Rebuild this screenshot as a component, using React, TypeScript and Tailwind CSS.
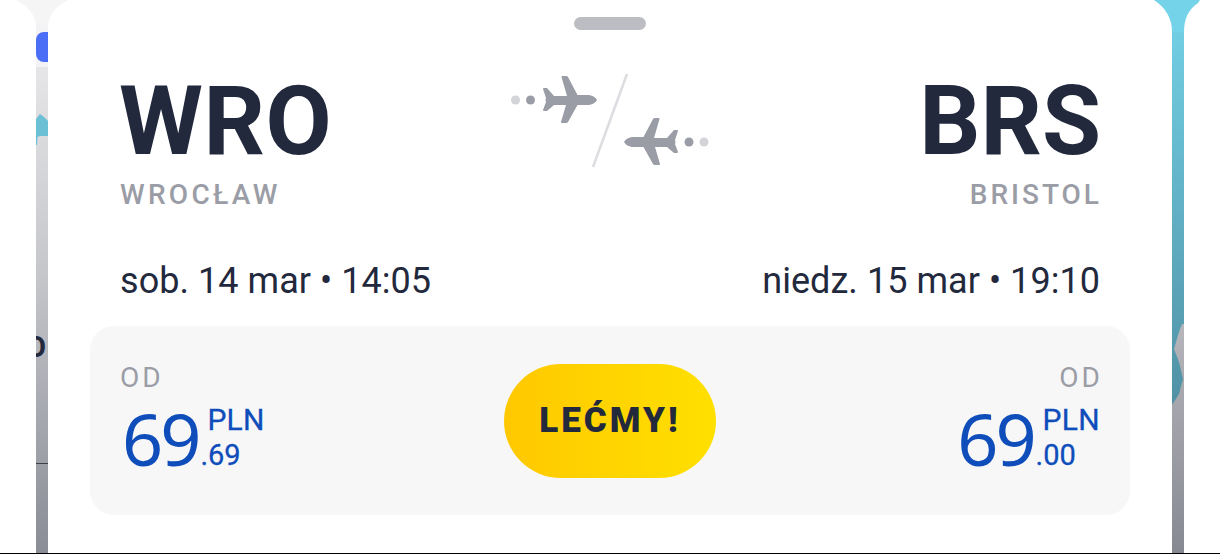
const planePath =
  "M0 13 Q0 12 1 12 H4 L11 20 H24 L18.500 1 Q18.300 0 19.500 0 H23 Q24.500 0 25 1 L34.500 19 H46 Q52 20 54 24 Q52 28 46 29 H34.500 L25 46 Q24.500 47 23 47 H19 Q17.800 47 18 46 L23 29 H11 L4 35 H1 Q0 35 0 34 L3 26 Q2 24 3 22 Z";

const Planes = () => (
  <svg width="200" height="96" viewBox="0 0 200 96" className="block mt-[-1px]">
    <circle cx="5.500" cy="28" r="4.500" fill="#d3d4d8" />
    <circle cx="20.500" cy="28" r="4.500" fill="#9b9da6" />
    <path transform="translate(33 4)" d={planePath} fill="#9b9da6" />
    <line x1="117" y1="2" x2="83" y2="95" stroke="#dcdde0" strokeWidth="2.500" />
    <path transform="translate(168 46) scale(-1 1)" d={planePath} fill="#9b9da6" />
    <circle cx="179" cy="70" r="4.500" fill="#9b9da6" />
    <circle cx="194" cy="70" r="4.500" fill="#d3d4d8" />
  </svg>
);

const Price = ({ value, cents, right }: { value: string; cents: string; right?: boolean }) => (
  <div className={`flex flex-col ${right ? "items-end" : "items-start"}`}>
    <div className={`text-[28px] leading-[30px] tracking-[3px] font-normal text-[#9b9da6] mt-[1px] ${right ? "mr-[-3px]" : ""}`}>OD</div>
    <div className={`flex items-start mt-[9px] text-[#0f4dbb] ${right ? "" : "ml-[2px]"}`}>
      <div className="text-[72px] leading-[72px] tracking-[-3px] font-['Noto_Sans',sans-serif] h-[72px] flex items-center">{value}</div>
      <div className="flex flex-col mt-[3px] ml-[2px]">
        <div className="text-[30px] leading-[30px] pl-[7px] tracking-[0.300px] font-normal [-webkit-text-stroke:0.3px_#0f4dbb]">PLN</div>
        <div className="text-[29px] leading-[30px] mt-[5px] font-normal [-webkit-text-stroke:0.3px_#0f4dbb]">{cents}</div>
      </div>
    </div>
  </div>
);

export default function App() {
  return (
    <div className="relative flex h-[554px] w-[1220px] overflow-hidden bg-white font-['Roboto',sans-serif] border-b border-black">
      <div className="w-[36px] shrink-0 bg-white" />
      <div className="relative w-[12px] shrink-0 bg-gradient-to-b from-[#f0f0f1] via-[#c5c6ca] to-[#8a8c96]">
        <svg className="absolute left-[-20px] top-0" width="52" height="30" viewBox="0 0 52 30">
          <path d="M0 0 H52 Q32 10 32 28 H20 Q20 10 0 0Z" fill="#f6f5f5" />
        </svg>
        <div className="absolute left-0 top-[25px] h-[42px] w-full bg-[#f3f3f5]" />
        <div className="absolute left-0 top-[32px] h-[30px] w-full rounded-l-[8px] bg-[#4a6ef5]" />
        <svg className="absolute left-0 top-[114px]" width="12" height="31" viewBox="0 0 12 31">
          <path d="M0 5 L4 0 L8 3 L12 7 V22 H4 L1.500 23 L1 31 H0Z" fill="#6cc0d6" />
        </svg>
        <div className="absolute left-0 top-[332px] text-[29px] leading-[30px] font-bold text-[#23293d] w-[12px] overflow-hidden">
          <span className="block ml-[-10px]">O</span>
        </div>
        <div className="absolute left-0 top-[463px] h-px w-full bg-[#3f4047]" />
      </div>

      <div className="w-[1124px] shrink-0 rounded-t-[20px] bg-white flex flex-col px-[42px]">
        <div className="self-center mt-[17px] h-[13px] w-[72px] rounded-full bg-[#bcbdc3]" />
        <div className="grid grid-cols-[1fr_auto_1fr] pl-[30px] pr-[30px] mt-[43px]">
          <div>
            <div className="text-[96px] leading-[96px] font-bold text-[#23293d] tracking-[0.500px] ml-[-1px]">WRO</div>
            <div className="text-[28px] leading-[32px] mt-[10px] tracking-[3.300px] font-medium text-[#9b9da6]">WROCŁAW</div>
          </div>
          <Planes />
          <div className="flex flex-col items-end">
            <div className="text-[96px] leading-[96px] font-bold text-[#23293d] mr-[-1px]">BRS</div>
            <div className="text-[28px] leading-[32px] mt-[10px] tracking-[3px] font-medium text-[#9b9da6] mr-[-2px]">BRISTOL</div>
          </div>
        </div>
        <div className="flex justify-between pl-[30px] pr-[30px] mt-[50px] text-[36px] leading-[40px] tracking-[0.050px] text-[#23293d]">
          <div>sob. 14 mar • 14:05</div>
          <div>niedz. 15 mar • 19:10</div>
        </div>
        <div className="mt-[25px] h-[189px] rounded-[24px] bg-[#f7f7f8] grid grid-cols-[1fr_auto_1fr] items-start px-[30px] pt-[36px]">
          <Price value="69" cents=".69" />
          <div className="mt-[2px] pt-[1px] h-[114px] w-[212px] rounded-full bg-gradient-to-r from-[#ffc800] to-[#ffe000] flex items-center justify-center text-[35px] font-black tracking-[3px] text-[#23293d]">
            LEĆMY!
          </div>
          <Price value="69" cents=".00" right />
        </div>
      </div>

      <div className="relative w-[12px] shrink-0 bg-gradient-to-b from-[#74d3e8] to-[#5090a4] to-[410px]">
        <svg className="absolute left-[-18px] top-0" width="46" height="34" viewBox="0 0 46 34">
          <path d="M0 0 H46 L44 3 Q30 12 30 32 H18 Q18 12 0 0Z" fill="#74d3e8" />
        </svg>
        <svg className="absolute left-0 top-[324px]" width="12" height="230" viewBox="0 0 12 230">
          <defs>
            <linearGradient id="grayMap" x1="0" y1="0" x2="0" y2="1">
              <stop offset="0" stopColor="#b6b6bb" />
              <stop offset="1" stopColor="#868892" />
            </linearGradient>
          </defs>
          <path d="M12 0 H10 L7 8 L2 25 L7 38 L11 55 L7 70 L0 81 V230 H12Z" fill="url(#grayMap)" />
        </svg>
      </div>
      <div className="w-[36px] shrink-0 bg-white" />
    </div>
  );
}
